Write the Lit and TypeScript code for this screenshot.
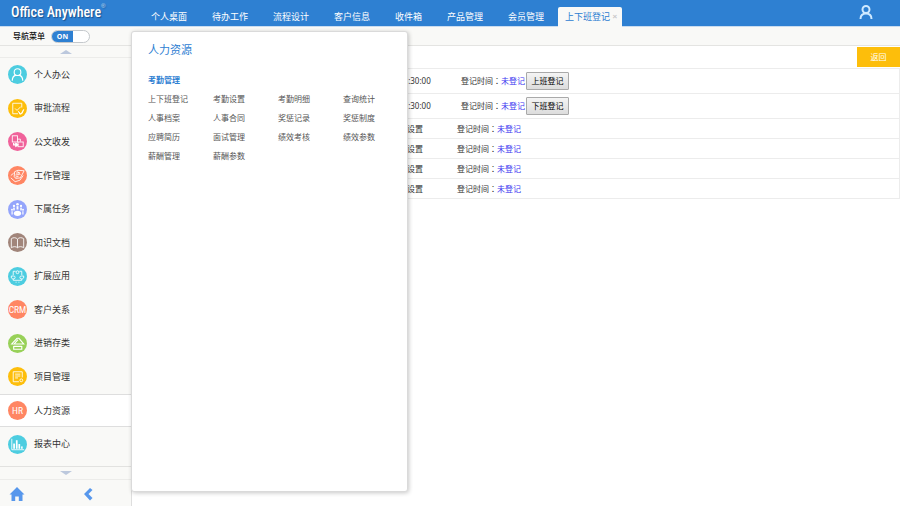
import { LitElement, html, svg, css, type SVGTemplateResult } from "lit";
import { customElement, state } from "lit/decorators.js";
import { classMap } from "lit/directives/class-map.js";
import { styleMap } from "lit/directives/style-map.js";

interface MenuEntry {
  label: string;
  color: string;
  icon: SVGTemplateResult;
}

const MENU: MenuEntry[] = [
  {
    label: "个人办公",
    color: "#4dcde0",
    icon: svg`<circle cx="10" cy="7.500" r="3.500" stroke-width="1.200" /><path stroke-width="1.200" d="M4.500 16.500c0-3.500 1.800-5.200 3.800-5.800M15.500 16.500c0-3.500-1.800-5.200-3.800-5.800" />`,
  },
  {
    label: "审批流程",
    color: "#fdbe0b",
    icon: svg`<path d="M14.500 9V4.500H5V15.500H10.500M7.500 10l2 2 4-4" /><path d="M11 13l2.500 3 3-5-1.500 4-2.500 1z" fill="#fff" />`,
  },
  {
    label: "公文收发",
    color: "#f0629a",
    icon: svg`<rect x="4.500" y="4" width="5.500" height="6.500" /><rect x="10.500" y="10.500" width="5.500" height="5" /><path d="M6 11.500v2h3" stroke-width="1.400" /><path d="M8 11.500l3 2-3 2z" fill="#fff" /><path d="M10 7.500h3V10" />`,
  },
  {
    label: "工作管理",
    color: "#ff8663",
    icon: svg`<path d="M7 6l3.500-1.500 6.500.5-4 7.500-5 .5-1.500-2zM3 12.500l4.500 4 5-1.500 3.500-5M8.500 7.500l4-.5M7.800 9.500l4-.5M8 11.500l3-.5M3 10l3-2.500M10 5.500l3 4" />`,
  },
  {
    label: "下属任务",
    color: "#94a5fb",
    icon: svg`<g fill="#fff" stroke="none"><ellipse cx="10" cy="14" rx="3.800" ry="2.800" /><circle cx="10" cy="4.500" r="1.400" /><rect x="9" y="6.500" width="2" height="3.500" /><circle cx="6.300" cy="6.300" r="1.200" /><rect x="5.500" y="8" width="1.600" height="3" /><circle cx="13.700" cy="6.300" r="1.200" /><rect x="12.900" y="8" width="1.600" height="3" /><circle cx="4.200" cy="10.300" r="1" /><rect x="3.700" y="11.800" width="1.200" height="3.500" /><circle cx="15.800" cy="10.300" r="1" /><rect x="15.100" y="11.800" width="1.200" height="3.500" /></g>`,
  },
  {
    label: "知识文档",
    color: "#a1857a",
    icon: svg`<path d="M10 6.500C8.500 4.500 5.500 4.500 3.500 6v9.500c2-1.500 5-1.500 6.500 0 1.500-1.500 4.500-1.500 6.500 0V6C14.500 4.500 11.500 4.500 10 6.500zM10 6.500v9" />`,
  },
  {
    label: "扩展应用",
    color: "#4dcde0",
    icon: svg`<path d="M8 4.500H5.500v4M12 4.500h2.500v4M5.500 12.500v1.500h9v-1.500M8 16h1M11 16h1" /><circle cx="10" cy="5.500" r="1.500" /><path d="M3.500 9.500h2.500a1.500 1.500 0 0 1 0 3H5l-1.500-1zM16.500 9.500H14a1.500 1.500 0 0 0 0 3h1l1.500-1z" />`,
  },
  {
    label: "客户关系",
    color: "#ff8663",
    icon: svg`<text class="glyph" x="10" y="14" text-anchor="middle">CRM</text>`,
  },
  {
    label: "进销存类",
    color: "#98d158",
    icon: svg`<path stroke-width="1.200" d="M5.500 10.500H4L9.500 4.500h2l5 6H6.500L10.500 6M6 12.500v3.500h8.500v-3.500M6 13h8.500" />`,
  },
  {
    label: "项目管理",
    color: "#fdbe0b",
    icon: svg`<path d="M15 11V5H5.500v10.500h6M7.500 7.500h5.500M7.500 9.500h5.500M7.500 11.500h3" /><circle cx="14" cy="14" r="1.500" />`,
  },
  {
    label: "人力资源",
    color: "#ff8663",
    icon: svg`<text class="glyph" x="10" y="14" text-anchor="middle">HR</text>`,
  },
  {
    label: "报表中心",
    color: "#4dcde0",
    icon: svg`<path d="M4 4v11.500h13" /><g fill="#fff" stroke="none"><rect x="5.500" y="9" width="1.800" height="5.500" /><rect x="8.300" y="5.500" width="1.800" height="9" /><rect x="11" y="9.500" width="1.800" height="5" /><rect x="13.800" y="12" width="1.600" height="2.500" /></g>`,
  },
];

const TABS = ["个人桌面", "待办工作", "流程设计", "客户信息", "收件箱", "产品管理", "会员管理"];

const SUBMENU = [
  "上下班登记", "考勤设置", "考勤明细", "查询统计",
  "人事档案", "人事合同", "奖惩记录", "奖惩制度",
  "应聘简历", "面试管理", "绩效考核", "绩效参数",
  "薪酬管理", "薪酬参数",
];

const SHIFTS: { time: string; action?: string }[] = [
  { time: "08:30:00", action: "上班登记" },
  { time: "17:30:00", action: "下班登记" },
  { time: "未设置" },
  { time: "未设置" },
  { time: "未设置" },
  { time: "未设置" },
];

@customElement("oa-topbar")
export class OaTopbar extends LitElement {
  static styles = css`
    :host {
      display: flex;
      height: 26px;
      background: #2e80d2;
      border-bottom: 1px solid #c9dcf0;
      color: #fff;
    }
    .logo {
      flex: none;
      display: flex;
      width: 140px;
      padding-left: 11px;
      font: 500 14px/24px "Roboto Condensed", "Open Sans Condensed", Lato, sans-serif;
      text-shadow: 1px 1px 1px #1b4f8a;
      white-space: nowrap;
      box-sizing: border-box;
    }
    .logo sup {
      font: 6px/12px "Liberation Sans", sans-serif;
      opacity: 0.7;
    }
    nav {
      display: flex;
      flex: 1;
      gap: 25px;
      padding-left: 11px;
      align-items: flex-end;
      white-space: nowrap;
    }
    a {
      color: #fff;
      text-decoration: none;
      font-size: 9px;
      line-height: 19px;
    }
    .current {
      display: flex;
      justify-content: space-between;
      align-items: center;
      width: 64px;
      height: 20px;
      box-sizing: border-box;
      margin: 0 0 -1px -11px;
      padding: 0 5px 1px 7px;
      background: #f9f9f7;
      border-radius: 2px 2px 0 0;
    }
    .current a {
      color: #2e80d2;
    }
    button {
      border: 0;
      padding: 0;
      background: none;
      color: #c8c8c8;
      font: bold 8px/18px "Liberation Sans", sans-serif;
    }
    .user {
      padding: 0 26px 2px 0;
      display: flex;
      align-items: center;
    }
    svg {
      display: block;
      width: 16px;
      height: 16px;
      fill: none;
      stroke: #cfe9ff;
      stroke-width: 2;
    }
  `;

  render() {
    return html`
      <div class="logo">Office Anywhere<sup>®</sup></div>
      <nav>
        ${TABS.map((t) => html`<a href="#">${t}</a>`)}
        <div class="current"><a href="#">上下班登记</a><button aria-label="关闭">×</button></div>
      </nav>
      <button class="user" aria-label="用户">
        <svg viewBox="0 0 16 16"><circle cx="8" cy="5.500" r="3.500" /><path d="M2.500 15c0-3.500 2-5.500 5.500-5.500s5.500 2 5.500 5.500" /></svg>
      </button>
    `;
  }
}

@customElement("oa-sidebar")
export class OaSidebar extends LitElement {
  @state() private active = "人力资源";

  static styles = css`
    :host {
      display: flex;
      flex-direction: column;
      background: #f9f9f7;
      border-right: 1px solid #dedede;
      color: #333;
    }
    .scroll {
      display: flex;
      justify-content: center;
      align-items: center;
      height: 12px;
      padding: 0;
      border: 0;
      background: none;
    }
    .scroll.up {
      border-bottom: 1px solid #ececea;
    }
    .scroll.down {
      height: 14px;
      border-top: 1px solid #e2e2e0;
      border-bottom: 1px solid #ececea;
    }
    .scroll svg {
      width: 12px;
      height: 4px;
      fill: #bcc8dd;
    }
    ul {
      display: flex;
      flex-direction: column;
      flex: 1;
      margin: 0;
      padding: 0 0 5px;
      list-style: none;
    }
    li {
      flex: 1 1 0;
      display: flex;
    }
    a {
      flex: 1;
      display: flex;
      align-items: center;
      gap: 7px;
      padding-left: 8px;
      color: inherit;
      text-decoration: none;
      font-size: 9px;
      line-height: 12px;
      border: solid transparent;
      border-width: 1px 0;
    }
    .active a {
      background: #fff;
      border-color: #dedede;
    }
    .badge {
      width: 19px;
      height: 19px;
      border-radius: 50%;
    }
    .badge svg {
      display: block;
      fill: none;
      stroke: #fff;
      stroke-width: 0.9;
    }
    .glyph {
      font: 10px "Roboto Condensed", "Open Sans Condensed", Roboto, sans-serif;
      fill: #fff;
      stroke: none;
    }
    footer {
      display: flex;
      height: 26px;
      align-items: center;
      padding: 2px 0 0 9px;
      gap: 55px;
      box-sizing: border-box;
    }
    footer button {
      border: 0;
      padding: 0;
      background: none;
    }
    footer svg {
      display: block;
      width: 16px;
      height: 16px;
      fill: #5797ec;
    }
  `;

  render() {
    return html`
      <button class="scroll up" aria-label="向上"><svg viewBox="0 0 12 4"><path d="M0 4L6 0l6 4z" /></svg></button>
      <ul>
        ${MENU.map(
          (m) => html`<li class=${classMap({ active: m.label === this.active })}>
            <a href="#" @click=${() => (this.active = m.label)}>
              <span class="badge" style=${styleMap({ background: m.color })}>
                <svg viewBox="0 0 20 20" width="19" height="19">${m.icon}</svg>
              </span>
              ${m.label}
            </a>
          </li>`
        )}
      </ul>
      <button class="scroll down" aria-label="向下"><svg viewBox="0 0 12 4"><path d="M0 0h12L6 4z" /></svg></button>
      <footer>
        <button aria-label="主页"><svg viewBox="0 0 16 16"><path d="M8 1l7.500 7.500H13.500V15H9.800v-4.500H6.200V15H2.500V8.500H.5z" /></svg></button>
        <button aria-label="收起"><svg viewBox="0 0 16 16"><path d="M10 2l2.500 2L8.500 8l4 4L10 14.500 4 8z" /></svg></button>
      </footer>
    `;
  }
}

@customElement("oa-attendance")
export class OaAttendance extends LitElement {
  static styles = css`
    :host {
      display: block;
      background: #fff;
      font-size: 8px;
      line-height: 12px;
      color: #333;
    }
    .bar {
      display: flex;
      justify-content: flex-end;
      padding: 1px 0;
    }
    .back {
      width: 43px;
      height: 20px;
      border: 0;
      padding: 0;
      background: #fdbe0b;
      color: #fff;
      font: inherit;
    }
    table {
      width: 100%;
      border-collapse: collapse;
      border: solid #ececec;
      border-width: 1px 1px 1px 0;
    }
    td {
      height: 20px;
      box-sizing: border-box;
      padding: 0;
      border-bottom: 1px solid #ececec;
      white-space: nowrap;
    }
    .open td {
      height: 25px;
    }
    .name {
      width: 267px;
    }
    .time {
      width: 58px;
    }
    .open .entry {
      padding-left: 4px;
    }
    .colon {
      font-family: "Noto Sans CJK TC", sans-serif;
    }
    .status {
      color: #3a34f0;
    }
    .punch {
      width: 43px;
      height: 18px;
      margin-left: 1px;
      padding: 0;
      border: 1px solid #a9a9a9;
      border-radius: 1px;
      background: linear-gradient(#f4f4f4, #dcdcdc);
      color: #000;
      font: inherit;
    }
  `;

  render() {
    return html`
      <div class="bar"><button class="back">返回</button></div>
      <table>
        ${SHIFTS.map(
          (s) => html`<tr class=${classMap({ open: !!s.action })}>
            <td class="name"></td>
            <td class="time">${s.time}</td>
            <td class="entry">登记时间<span class="colon" lang="zh-Hant">：</span><span class="status">未登记</span>${s.action
                ? html`<button class="punch">${s.action}</button>`
                : ""}</td>
          </tr>`
        )}
      </table>
    `;
  }
}

@customElement("oa-flyout")
export class OaFlyout extends LitElement {
  static styles = css`
    :host {
      display: block;
      box-sizing: border-box;
      padding: 10px 0 0 16px;
      background: #fff;
      border: 1px solid #dadada;
      border-radius: 3px;
      box-shadow: 1px 1px 4px #00000038;
      font-size: 8px;
      color: #555;
    }
    h2 {
      margin: 0 0 15px;
      font-size: 11px;
      line-height: 16px;
      font-weight: 400;
      color: #2e80d2;
    }
    h3 {
      margin: 0 0 2px;
      font-size: 8px;
      line-height: 14px;
      font-weight: 700;
      color: #2e80d2;
    }
    ul {
      display: grid;
      grid-template-columns: repeat(4, 65px);
      margin: 0;
      padding: 0;
      list-style: none;
    }
    a {
      color: inherit;
      text-decoration: none;
    }
    li {
      height: 19px;
      line-height: 19px;
    }
  `;

  render() {
    return html`
      <h2>人力资源</h2>
      <h3>考勤管理</h3>
      <ul>
        ${SUBMENU.map((s) => html`<li><a href="#">${s}</a></li>`)}
      </ul>
    `;
  }
}

@customElement("app-root")
export class AppRoot extends LitElement {
  @state() private navOn = true;

  static styles = css`
    :host {
      display: flex;
      flex-direction: column;
      position: relative;
      min-height: 100vh;
      background: #fff;
      font-family: "Noto Sans", "Noto Sans CJK SC", sans-serif;
      font-weight: 400;
    }
    .subbar {
      display: flex;
      align-items: center;
      gap: 6px;
      height: 18px;
      padding-left: 13px;
      background: #f9f9f7;
      border-bottom: 1px solid #e4e4e2;
      font-size: 8px;
      line-height: 12px;
      color: #111;
    }
    .caption {
      font-weight: 500;
    }
    .switch {
      position: relative;
      display: flex;
      width: 37px;
      height: 11px;
      border: 1px solid #c4c8cc;
      border-radius: 7px;
      background: #fff;
      overflow: hidden;
    }
    .switch input {
      position: absolute;
      inset: 0;
      margin: 0;
      opacity: 0;
    }
    .knob {
      width: 21px;
      background: #2e80d2;
      color: #fff;
      font: bold 7px/11px "Open Sans", sans-serif;
      text-align: center;
    }
    .body {
      flex: 1;
      display: grid;
      grid-template-columns: 132px 1fr;
    }
    .flyout {
      position: absolute;
      left: 131px;
      top: 31px;
      bottom: 14px;
      width: 277px;
    }
  `;

  render() {
    return html`
      <oa-topbar></oa-topbar>
      <div class="subbar">
        <label class="caption" for="nav">导航菜单</label>
        <div class="switch">
          <input id="nav" type="checkbox" .checked=${this.navOn} @change=${() => (this.navOn = !this.navOn)} />
          <span class="knob">${this.navOn ? "ON" : "OFF"}</span>
        </div>
      </div>
      <div class="body">
        <oa-sidebar></oa-sidebar>
        <oa-attendance></oa-attendance>
      </div>
      <oa-flyout class="flyout"></oa-flyout>
    `;
  }
}
